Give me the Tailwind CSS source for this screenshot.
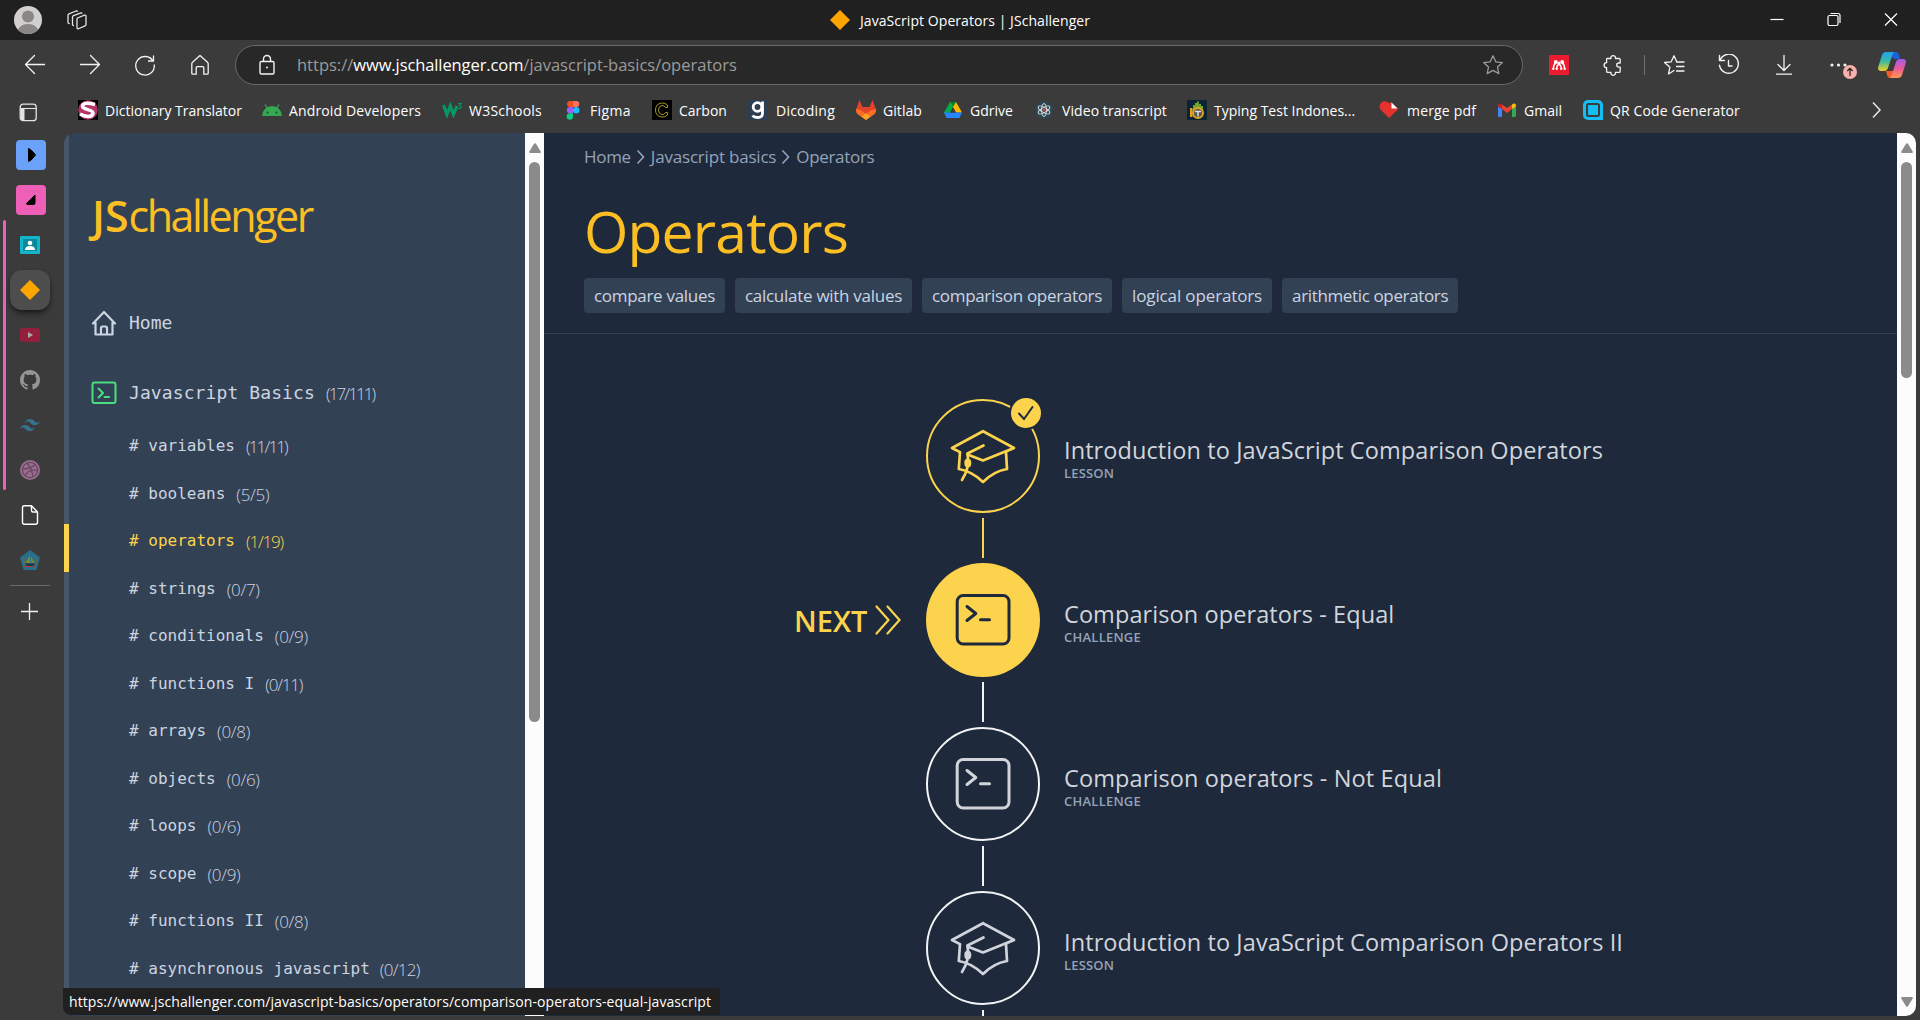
<!DOCTYPE html>
<html lang="en">
<head>
<meta charset="utf-8">
<title>JavaScript Operators | JSchallenger</title>
<script src="https://cdn.jsdelivr.net/npm/@tailwindcss/browser@4"></script>
</head>
<body class="flex h-[1020px] w-[1920px] flex-col overflow-hidden bg-[#3b3b3b] font-['Open_Sans',sans-serif] text-white">

<!-- shared icon shapes -->
<svg class="hidden">
  <symbol id="cap" viewBox="0 0 114 114"><g fill="none" stroke="currentColor" stroke-width="2.7" stroke-linecap="round" stroke-linejoin="round"><path d="M57 32.2 26 49l7 3.6M88 49 57 32.2M88 49 57 61.5 41.5 55.500M88 49l-7 3"/><path d="M57.500 46.500 41.500 54.500C43 63 42 72 36 81"/><path d="M34 53 32.800 70c9 1.500 17 6 24.200 13 7-7 15-11.500 24-13L80 53"/></g><ellipse cx="41.800" cy="64" rx="3.500" ry="4.500" fill="currentColor"/></symbol>
  <symbol id="term" viewBox="0 0 114 114"><g fill="none" stroke="currentColor" stroke-width="3" stroke-linecap="round" stroke-linejoin="round"><rect x="31.200" y="32.500" width="51.800" height="48.500" rx="6"/><path d="m41 43.500 8.800 7-8.800 7M54.500 56.700h9"/></g></symbol>
</svg>

<!-- title bar -->
<header class="flex h-10 shrink-0 items-center bg-[#202020] pl-[14px] text-[14px]">
  <svg class="size-7" viewBox="0 0 28 28"><clipPath id="av"><circle cx="14" cy="14" r="14"/></clipPath><g clip-path="url(#av)"><path fill="#d2d0ce" d="M0 0h28v28H0z"/><circle cx="14" cy="10.500" r="6" fill="#8a8886"/><ellipse cx="14" cy="26" rx="10.500" ry="8" fill="#8a8886"/></g></svg>
  <svg class="ml-[23px] size-6" viewBox="0 0 24 24" fill="none" stroke="#e4e4e4" stroke-width="1.300" stroke-linejoin="round"><path d="m12.500 10 7-2.800q1.500-.5 1.500 1v8.300q0 1-1 1.400l-6 2.600q-2 .8-2-1v-8.300q0-.9.500-1.200z"/><path d="M9 17.500q-1.500.2-1.500-1.200V9q0-1 1-1.400L16 4.800q1 0 1.300.8"/><path d="M4.800 15.500q-1.800.2-1.800-1.200V7.200q0-1 1-1.400L11 3q1.300-.3 1.700.8"/></svg>
  <div class="ml-[740px] flex w-[265px] items-center gap-[9px]">
    <svg class="size-[22px]" viewBox="0 0 22 22"><path fill="#ffa500" d="M11 1l10 10-10 10L1 11z"/></svg>
    <span class="whitespace-nowrap tracking-[0.06px]">JavaScript Operators | JSchallenger</span>
  </div>
  <div class="ml-auto flex items-center gap-[41px] pr-[21px]">
    <svg class="size-4" viewBox="0 0 16 16" stroke="#fff" stroke-width="1.200"><path d="M1.500 7.500h13"/></svg>
    <svg class="size-4" viewBox="0 0 16 16" fill="none" stroke="#fff" stroke-width="1.200"><rect x="2" y="3.500" width="10" height="10" rx="1.500"/><path d="M4.500 1.500h7.500q2 0 2 2V11"/></svg>
    <svg class="size-4" viewBox="0 0 16 16" stroke="#fff" stroke-width="1.200"><path d="m2 1.500 12 12m0-12-12 12"/></svg>
  </div>
</header>

<!-- navigation toolbar -->
<nav class="flex h-[50px] shrink-0 items-center pl-[23px] text-[#f3f3f3]">
  <div class="flex gap-[31px]">
    <svg class="size-6" viewBox="0 0 24 24" fill="none" stroke="currentColor" stroke-width="1.300" stroke-linecap="round" stroke-linejoin="round"><path d="M21.500 11.500h-19m9-9-9 9 9 9"/></svg>
    <svg class="size-6" viewBox="0 0 24 24" fill="none" stroke="currentColor" stroke-width="1.300" stroke-linecap="round" stroke-linejoin="round"><path d="M2.500 11.500h19m-9-9 9 9-9 9"/></svg>
    <svg class="size-6" viewBox="0 0 24 24" fill="none" stroke="currentColor" stroke-width="1.300" stroke-linecap="round" stroke-linejoin="round"><path d="M20.500 3v5h-5M20 8a9.300 9.300 0 1 0 1.300 4"/></svg>
    <svg class="size-6" viewBox="0 0 24 24" fill="none" stroke="currentColor" stroke-width="1.300" stroke-linejoin="round"><path d="m12 2.500 7.500 6.700q.7.600.7 1.600v9.400q0 1-1 1h-3.400v-6.500q0-1-1-1H9.200q-1 0-1 1v6.500H4.800q-1 0-1-1v-9.400q0-1 .7-1.600z"/></svg>
  </div>
  <div class="ml-[23px] flex h-10 w-[1288px] items-center rounded-full border border-[#6a6a6a] bg-[#282828] pl-[19px] pr-[18px]">
    <svg class="size-6" viewBox="0 0 24 24" fill="none" stroke="currentColor" stroke-width="1.400"><rect x="5" y="8.500" width="14" height="12.500" rx="1.500"/><path d="M8.500 8.500V6a3.500 3.500 0 0 1 7 0v2.500"/><circle cx="12" cy="14.500" r="1" fill="currentColor" stroke="none"/></svg>
    <p class="ml-[18px] whitespace-nowrap text-[16.5px] text-[#9b9b9b]"><span>https://</span><span class="tracking-[-0.1px] text-white">www.jschallenger.com</span><span>/javascript-basics/operators</span></p>
    <svg class="ml-auto size-[22px] text-[#9b9b9b]" viewBox="0 0 22 22" fill="none" stroke="currentColor" stroke-width="1.300" stroke-linejoin="round"><path d="m11 1.800 2.800 6 6.600.8-4.900 4.500 1.300 6.500-5.800-3.200-5.800 3.200 1.300-6.500L1.600 8.600l6.600-.8z"/></svg>
  </div>
  <div class="ml-[26px] flex size-5 items-center justify-center bg-[#eb1c2d]"><svg class="h-3 w-4" viewBox="0 0 16 12" fill="#fff"><circle cx="4.800" cy="3" r="2"/><circle cx="11.200" cy="3" r="2"/><circle cx="8" cy="4" r="1.500"/><path fill="none" stroke="#fff" stroke-width="1.400" d="M5 4Q2.500 5 2.500 9M11 4q2.500 1 2.500 5M8 5q-2 1-2.500 4.500M8 5q2 1 2.500 4.500"/><circle cx="2.300" cy="9.800" r="1.200"/><circle cx="5.800" cy="9.800" r="1.200"/><circle cx="10.200" cy="9.800" r="1.200"/><circle cx="13.700" cy="9.800" r="1.200"/></svg></div>
  <svg class="ml-[33px] size-[22px]" viewBox="0 0 22 22" fill="none" stroke="currentColor" stroke-width="1.300" stroke-linejoin="round"><path d="M5 4.500h4a2.300 2.300 0 1 1 4.400 0H17q1.200 0 1.200 1.200V9h-1.400a2.100 2.100 0 0 0 0 4.200h1.400v4q0 1.200-1.200 1.200h-3.600a2.300 2.300 0 1 1-4.400 0H5.800q-1.200 0-1.200-1.200v-3.500a2.500 2.500 0 0 1 0-5V5z"/></svg>
  <div class="ml-[20px] h-5 w-px bg-[#707070]"></div>
  <svg class="ml-[18px] size-[22px]" viewBox="0 0 22 22" fill="none" stroke="currentColor" stroke-width="1.300" stroke-linejoin="round" stroke-linecap="round"><path d="M11 16.500 5.500 20l1.400-6.800L1.500 8.500l6.700-.7L11 1.800l2.500 5.400M13.500 8H21M13.500 12.500H21M13.500 17H21"/></svg>
  <svg class="ml-[33px] size-[22px]" viewBox="0 0 22 22" fill="none" stroke="currentColor" stroke-width="1.400" stroke-linejoin="round" stroke-linecap="round"><path d="M1.500 1.500v5h5M2 6.300a9.500 9.500 0 1 1-.5 5M10.500 6.500V12H14"/></svg>
  <svg class="ml-[33px] size-[22px]" viewBox="0 0 22 22" fill="none" stroke="currentColor" stroke-width="1.300" stroke-linecap="round"><path d="M11 1.500v15m-6-6 6 6 6-6M3.500 20.200h15"/></svg>
  <div class="relative ml-[34px] h-[22px] w-[30px]">
    <svg class="size-full" viewBox="0 0 30 22" fill="currentColor"><circle cx="3" cy="11" r="1.600"/><circle cx="9.500" cy="11" r="1.600"/><circle cx="16" cy="11" r="1.600"/></svg>
    <svg class="absolute left-[14px] top-[11px] size-[14px]" viewBox="0 0 14 14"><circle cx="7" cy="7" r="7" fill="#f8b0aa"/><path d="M7 11V3.500M4.300 6 7 3.300 9.700 6" fill="none" stroke="#222" stroke-width="1.200"/></svg>
  </div>
  <svg class="ml-[19px] size-7" viewBox="0 0 28 28"><defs><linearGradient id="c1" x1="0" y1="0" x2="0" y2="1"><stop offset="0" stop-color="#1fa2f0"/><stop offset=".5" stop-color="#3fb9a0"/><stop offset="1" stop-color="#f5d020"/></linearGradient><linearGradient id="c2" x1="0" y1="0" x2="0" y2="1"><stop offset="0" stop-color="#a15cf0"/><stop offset=".5" stop-color="#ea5a9a"/><stop offset="1" stop-color="#ff9a50"/></linearGradient></defs><path fill="#1c5fd8" d="M8 1h10q2 0 2.700 2l1.300 5h-6z"/><path fill="#f4592f" d="M8 20h8l-2 7h-2q-2 0-2.700-2z"/><path fill="url(#c1)" d="M8 1h9q-2 0-3 4l-4 12q-1 3-4 3H3q-4 0-2.500-5L4 4q1-3 4-3z"/><path fill="url(#c2)" d="M20 27h-9q2 0 3-4l4-12q1-3 4-3h3q4 0 2.500 5L24 24q-1 3-4 3z"/></svg>
</nav>

<!-- favourites bar -->
<div class="flex h-[43px] shrink-0 items-center pb-[3px] pl-[19px] text-[14px]">
  <svg class="mr-[40px] mt-[4px] size-[19px] shrink-0" viewBox="0 0 19 19"><rect x="1.200" y="1.200" width="16" height="16.500" rx="3" fill="none" stroke="#e4e4e4" stroke-width="1.300"/><path fill="#e4e4e4" d="M1.500 6h4v11.500H4q-2.500 0-2.500-2.500z"/><path stroke="#e4e4e4" d="M1 5.500h16.500"/></svg>

  <div class="flex w-[184px] items-center gap-[7px]"><svg class="size-5 shrink-0" viewBox="0 0 20 20"><path d="M0 0h20v20H0z"/><circle cx="10" cy="10" r="9.800" fill="#b53468"/><path fill="none" stroke="#fff" stroke-width="3.500" d="M17 4.500Q5 1.500 4.500 6c-.3 4.200 11.500 3 10.500 7.500-.8 4-8 3.500-13 .5"/></svg><span class="whitespace-nowrap">Dictionary Translator</span></div>
  <div class="flex w-[180px] items-center gap-[7px]"><svg class="size-5 shrink-0" viewBox="0 0 20 20"><path fill="#34a853" d="M0 16a10 10 0 0 1 20 0z"/><path stroke="#34a853" stroke-width="1.200" d="m5.500 8.500-2.500-4m11.500 4 2.500-4"/><circle cx="5.500" cy="12.500" r="1" fill="#1c4427"/><circle cx="14.500" cy="12.500" r="1" fill="#1c4427"/></svg><span class="whitespace-nowrap tracking-[0.14px]">Android Developers</span></div>
  <div class="flex w-[121px] items-center gap-[7px]"><svg class="size-5 shrink-0" viewBox="0 0 20 20" fill="none" stroke="#059862"><path stroke-width="3.200" d="m1.500 5 3.500 9.500L8.300 6l3.200 8.500L15 6"/><path stroke-width="1.200" d="M16 3.500h3L17.500 5.500q2.500.5 1 2.500-1 1-2.500.3"/></svg><span class="whitespace-nowrap tracking-[0.23px]">W3Schools</span></div>
  <div class="flex w-[89px] items-center gap-[7px]"><svg class="size-5 shrink-0" viewBox="0 0 20 20"><path fill="#f24e1e" d="M10 1v6H7a3 3 0 0 1 0-6z"/><path fill="#ff7262" d="M10 1h3.300a3 3 0 0 1 0 6H10z"/><path fill="#a259ff" d="M10 7v6.300H7A3 3 0 0 1 7 7z"/><circle cx="13.200" cy="10.200" r="3.200" fill="#1abcfe"/><path fill="#0acf83" d="M10 13.300v3.400a3.200 3.200 0 1 1-3-3.400z"/></svg><span class="whitespace-nowrap tracking-[0.38px]">Figma</span></div>
  <div class="flex w-[96px] items-center gap-[7px]"><svg class="size-5 shrink-0" viewBox="0 0 20 20"><path d="M0 0h20v20H0z"/><path fill="none" stroke="#a39a1c" stroke-width="1" d="M15.500 7.500V5Q13 2.500 9.500 3 3.500 4 3.500 10t6 7q3.500.5 6-2v-2.500h-2Q12 15 10 14.500 6.500 14 6.500 10T10 5.500q2-.3 3.500 2z"/></svg><span class="whitespace-nowrap">Carbon</span></div>
  <div class="flex w-[108px] items-center gap-[8px]"><svg class="size-5 shrink-0" viewBox="0 0 20 20"><path fill="#2d3e50" d="M0 0h20v20H0z"/><g fill="none" stroke="#fff" stroke-width="2.800"><circle cx="9.500" cy="7" r="4.300"/><path d="M14.500 1.500v12q0 4-5 4-3.500 0-5-2"/></g></svg><span class="whitespace-nowrap tracking-[0.24px]">Dicoding</span></div>
  <div class="flex w-[87px] items-center gap-[7px]"><svg class="size-5 shrink-0" viewBox="0 0 20 20"><path fill="#e24329" d="M3.500 0 6.500 7h7l3-7L20 9.500 10 19.500 0 9.500z"/><path fill="#fc6d26" d="M0 9q5 .5 10 5 5-4.500 10-5 .5 3.500-2 5.500l-8 5.500-8-5.500Q-.5 12.500 0 9z"/><path fill="#fca326" d="m5.500 16.500 4.500-3.300 4.500 3.300L10 20z"/></svg><span class="whitespace-nowrap tracking-[0.07px]">Gitlab</span></div>
  <div class="flex w-[91px] items-center gap-[7px]"><svg class="size-5 shrink-0" viewBox="0 0 20 20"><path fill="#00ac47" d="M7 2h3.500v4L4.500 18 1 12.500z"/><path fill="#ffba00" d="M7 2h6l6 10.500h-6z"/><path fill="#00832d" d="M7 2h6l-3 5z"/><path fill="#2684fc" d="M4 12.500h15L16.500 18H3.500L1 12.500z"/><path fill="#3b3b3b" d="m10 7.500 3 5H7z"/></svg><span class="whitespace-nowrap">Gdrive</span></div>
  <div class="flex w-[153px] items-center gap-[8px]"><svg class="size-5 shrink-0" viewBox="0 0 20 20"><circle cx="10" cy="10" r="9" fill="#2c4654"/><g fill="none" stroke="#d9d9d9" stroke-width="1"><ellipse cx="10" cy="10" rx="2.500" ry="6.500"/><ellipse cx="10" cy="10" rx="2.500" ry="6.500" transform="rotate(60 10 10)"/><ellipse cx="10" cy="10" rx="2.500" ry="6.500" transform="rotate(-60 10 10)"/></g><circle cx="10" cy="10" r="1.300" fill="#e0455e"/></svg><span class="whitespace-nowrap tracking-[0.08px]">Video transcript</span></div>
  <div class="flex w-[192px] items-center gap-[7px]"><svg class="size-5 shrink-0" viewBox="0 0 20 20"><path fill="#0d2435" d="M0 0h20v20H0z"/><path fill="#6fa52c" d="M6 11V5h2V3h2V1.500h2V4h2v2h2v5z"/><path fill="#e0a321" d="M3 8h2.500v9H3z"/><circle cx="11" cy="13" r="5" fill="#555" stroke="#e0a321" stroke-width="2"/><path stroke="#ddd" stroke-width="1.500" d="M8 11.500h6m-3 0v5"/></svg><span class="whitespace-nowrap">Typing Test Indones...</span></div>
  <div class="flex w-[118px] items-center gap-[8px]"><svg class="size-5 shrink-0" viewBox="0 0 20 20"><path fill="#e5322d" d="M10 18 1.500 9.500A5 5 0 0 1 10 3.500l2-1.500 7.500 7z"/><path fill="#fff" d="M12.500 2.500v6h6z"/></svg><span class="whitespace-nowrap tracking-[0.17px]">merge pdf</span></div>
  <div class="flex w-[86px] items-center gap-[7px]"><svg class="size-5 shrink-0" viewBox="0 0 20 20"><path fill="#4285f4" d="M1 6l4 3v8H2.500Q1 17 1 15.500z"/><path fill="#34a853" d="m19 6-4 3v8h2.500q1.500 0 1.500-1.500z"/><path fill="#ea4335" d="M5 4.500 10 8l5-3.500V9l-5 4-5-4z"/><path fill="#c5221f" d="M1 5.500Q1 3 3.500 3.500L5 4.500V9L1 6.500z"/><path fill="#fbbc04" d="M19 5.500Q19 3 16.500 3.500L15 4.500V9l4-2.500z"/></svg><span class="whitespace-nowrap">Gmail</span></div>
  <div class="flex items-center gap-[7px]"><svg class="size-5 shrink-0" viewBox="0 0 20 20"><rect width="20" height="20" rx="5" fill="#15bdf5"/><path fill="#15bdf5" d="M10 10h10v10H10z"/><rect x="4" y="4" width="12" height="12" rx="1.500" fill="none" stroke="#3b3b3b" stroke-width="2"/></svg><span class="whitespace-nowrap tracking-[0.14px]">QR Code Generator</span></div>
  <svg class="ml-auto mr-[35px] size-[18px]" viewBox="0 0 18 18" fill="none" stroke="#e8e8e8" stroke-width="1.500"><path d="m6 1.500 7 7.500-7 7.500"/></svg>
</div>

<div class="flex h-[883px] shrink-0">
  <!-- vertical tabs -->
  <aside class="relative -mt-px flex w-16 shrink-0 flex-col pl-[8px]">
    <div class="absolute left-[3px] top-[88px] h-[270px] w-[3px] rounded-full bg-[#ee5fb7]"></div>
    <div class="flex h-[45px] w-[46px] items-center justify-center"><div class="flex size-[30px] items-center justify-center rounded bg-[#6aa1fa]"><svg class="size-4" viewBox="0 0 16 16"><path d="M5.500 1.500q2.500.5 7 6.500-4.500 6-7 6.500z" stroke="#000" stroke-linejoin="round"/></svg></div></div>
    <div class="flex h-[45px] w-[46px] items-center justify-center"><div class="flex size-[30px] items-center justify-center rounded bg-[#ee5fb7]"><svg class="size-4" viewBox="0 0 16 16"><path d="M12 3v8q0 1.500-1.500 1.500H4Q3 12 4 11z" stroke="#000" stroke-linejoin="round"/></svg></div></div>
    <div class="flex h-[45px] w-[44px] items-center justify-center"><svg class="size-5" viewBox="0 0 20 20"><rect y="1" width="20" height="18" rx="1" fill="#14b5cc"/><rect x="3" y="4" width="14" height="12" fill="#0a8a96"/><circle cx="10" cy="8" r="2.300" fill="#fff"/><path fill="#fff" d="M5 15q0-4 5-4t5 4z"/></svg></div>
    <div class="flex h-[45px] w-[44px] items-center"><div class="ml-[2px] flex size-10 items-center justify-center rounded-xl bg-[#4d4d4d] shadow-md shadow-black/50"><svg class="size-5" viewBox="0 0 20 20"><path fill="#ffa500" d="m10 0 10 10-10 10L0 10z"/></svg></div></div>
    <div class="flex h-[45px] w-[44px] items-center justify-center"><svg class="size-5" viewBox="0 0 20 20"><rect y="3" width="20" height="14" rx="3" fill="#941f3c"/><path fill="#a9a9a9" d="m8 7 5 3-5 3z"/></svg></div>
    <div class="flex h-[45px] w-[44px] items-center justify-center"><svg class="size-5" viewBox="0 0 16 16" fill="#959595"><path d="M8 0C3.580 0 0 3.580 0 8c0 3.540 2.290 6.530 5.470 7.590.4.070.55-.17.55-.38 0-.19-.01-.82-.01-1.490-2.010.37-2.530-.49-2.690-.94-.09-.23-.48-.94-.82-1.130-.28-.15-.68-.52-.01-.53.63-.01 1.080.58 1.230.82.72 1.210 1.870.87 2.330.66.07-.52.28-.87.51-1.070-1.780-.2-3.640-.89-3.640-3.950 0-.87.31-1.590.82-2.150-.08-.2-.36-1.020.08-2.120 0 0 .67-.21 2.200.82.64-.18 1.320-.27 2-.27s1.360.09 2 .27c1.530-1.040 2.200-.82 2.200-.82.44 1.100.16 1.920.08 2.120.51.56.82 1.270.82 2.150 0 3.070-1.870 3.750-3.650 3.950.29.25.54.73.54 1.480 0 1.070-.01 1.930-.01 2.200 0 .21.15.46.55.38A8.010 8.010 0 0 0 16 8c0-4.420-3.580-8-8-8z"/></svg></div>
    <div class="flex h-[45px] w-[44px] items-center justify-center"><svg class="size-5" viewBox="0 0 24 24" fill="#36728f"><path d="M12 4.800c-3.200 0-5.200 1.600-6 4.800 1.200-1.600 2.600-2.200 4.200-1.800.9.230 1.570.9 2.300 1.650C13.700 10.650 15.100 12 18 12c3.200 0 5.200-1.600 6-4.800-1.200 1.600-2.600 2.200-4.200 1.800-.9-.23-1.570-.9-2.300-1.650C16.300 6.150 14.900 4.800 12 4.800zM6 12c-3.200 0-5.200 1.600-6 4.800 1.200-1.600 2.600-2.200 4.200-1.800.9.230 1.570.9 2.300 1.650 1.200 1.200 2.600 2.550 5.500 2.550 3.200 0 5.200-1.600 6-4.800-1.200 1.600-2.600 2.200-4.200 1.800-.9-.23-1.570-.9-2.300-1.650C10.300 13.350 8.900 12 6 12z"/></svg></div>
    <div class="flex h-[45px] w-[44px] items-center justify-center"><svg class="size-5" viewBox="0 0 20 20" fill="none" stroke="#6f4666" stroke-width="1.300"><circle cx="10" cy="10" r="10" fill="#966f8e" stroke="none"/><circle cx="10" cy="10" r="7.600"/><path d="M7 3q5 6 6 14M2.500 9q9 0 13-5M5 15.500q4-7 12.500-5"/></svg></div>
    <div class="flex h-[45px] w-[44px] items-center justify-center"><svg class="size-5" viewBox="0 0 20 20" fill="none" stroke="#fff" stroke-width="1.400" stroke-linejoin="round"><path d="M11.500.800H4.500q-2 0-2 2v14.400q0 2 2 2h11q2 0 2-2V7z"/><path d="M11.500 1v4.500q0 1.500 1.500 1.500h4.500"/></svg></div>
    <div class="flex h-[45px] w-[44px] items-center justify-center"><svg class="size-5" viewBox="0 0 20 20"><path fill="#28708a" d="m10 0 10 7.500L16.500 20h-13L0 7.500z"/><path fill="#7c8a2a" d="M10 5v8H5.500zm1 1 3.500 7H11z"/><path fill="#1d3340" d="M5 13.500h10l-2 2.500H7z"/><path stroke="#9c4141" stroke-width="1.200" d="M4 16.500h12"/><path stroke="#8d5d2f" stroke-width="1" d="M4 8v7m12-7v7"/></svg></div>
    <div class="ml-[2px] mt-[3px] h-px w-10 bg-[#6b6b6b]"></div>
    <svg class="ml-[12px] mt-[16px] size-[19px]" viewBox="0 0 19 19" stroke="#f0f0f0" stroke-width="1.300"><path d="M9.500 1v17M1 9.500h17"/></svg>
  </aside>

  <!-- page -->
  <div class="flex w-[1852px] overflow-hidden rounded-[10px] bg-[#1e293b]">
    <aside class="flex w-[461px] shrink-0 flex-col border-l-[5px] border-[#475569] bg-[#334155] text-[#cbd5e1]">
      <h2 class="ml-[23px] mt-[51px] whitespace-nowrap text-[43px] leading-[64px] text-[#fbbf24]"><span class="font-semibold">JS</span><span class="tracking-[-2.5px]">challenger</span></h2>
      <a class="ml-[22px] mt-[62px] flex h-[26px] items-center gap-3 font-['DejaVu_Sans_Mono',monospace] text-lg"><svg class="size-[26px]" viewBox="0 0 26 26" fill="none" stroke="currentColor" stroke-width="2.200" stroke-linecap="round" stroke-linejoin="round"><path d="M2 13.500 13 2l11 11.500M4.500 12v12.500h17V12M10 24v-6q0-1.500 1.500-1.500h3q1.500 0 1.500 1.500v6"/></svg><span>Home</span></a>
      <a class="ml-[22px] mt-[44px] flex h-[26px] items-center font-['DejaVu_Sans_Mono',monospace] text-lg"><svg class="mr-[12px] size-[26px]" viewBox="0 0 26 26" fill="none" stroke="#4ade80" stroke-width="2" stroke-linecap="round" stroke-linejoin="round"><rect x="1.500" y="2.500" width="23" height="20.500" rx="2"/><path d="m7.500 8.500 4.500 4.500-4.500 4.500M13.500 17h4.500"/></svg><span class="tracking-[0.1px]">Javascript Basics</span><span class="ml-[11px] mt-[3px] font-['Open_Sans'] text-[17px] font-light tracking-[-1.9px]">(17/111)</span></a>
      <ul class="mt-[23px] flex flex-col font-['DejaVu_Sans_Mono',monospace] text-base *:flex *:h-[47.5px] *:items-start *:whitespace-pre *:pl-[60px] *:pt-[5px]">
        <li><span># variables</span><span class="ml-[11px] font-['Open_Sans'] text-[17px] font-light tracking-[-1.85px]">(11/11)</span></li>
        <li><span># booleans</span><span class="ml-[11px] font-['Open_Sans'] text-[17px] font-light tracking-[-0.3px]">(5/5)</span></li>
        <li class="-ml-[5px] border-l-[5px] border-[#fcd34d] text-[#fcd34d]"><span># operators</span><span class="ml-[11px] font-['Open_Sans'] text-[17px] font-light tracking-[-1.2px]">(1/19)</span></li>
        <li><span># strings</span><span class="ml-[11px] font-['Open_Sans'] text-[17px] font-light tracking-[-0.3px]">(0/7)</span></li>
        <li><span># conditionals</span><span class="ml-[11px] font-['Open_Sans'] text-[17px] font-light tracking-[-0.3px]">(0/9)</span></li>
        <li><span># functions I</span><span class="ml-[11px] font-['Open_Sans'] text-[17px] font-light tracking-[-1.2px]">(0/11)</span></li>
        <li><span># arrays</span><span class="ml-[11px] font-['Open_Sans'] text-[17px] font-light tracking-[-0.3px]">(0/8)</span></li>
        <li><span># objects</span><span class="ml-[11px] font-['Open_Sans'] text-[17px] font-light tracking-[-0.3px]">(0/6)</span></li>
        <li><span># loops</span><span class="ml-[11px] font-['Open_Sans'] text-[17px] font-light tracking-[-0.3px]">(0/6)</span></li>
        <li><span># scope</span><span class="ml-[11px] font-['Open_Sans'] text-[17px] font-light tracking-[-0.3px]">(0/9)</span></li>
        <li><span># functions II</span><span class="ml-[11px] font-['Open_Sans'] text-[17px] font-light tracking-[-0.3px]">(0/8)</span></li>
        <li><span># asynchronous javascript</span><span class="ml-[10px] font-['Open_Sans'] text-[17px] font-light tracking-[-0.7px]">(0/12)</span></li>
      </ul>
    </aside>
    <div class="flex w-[19px] shrink-0 flex-col items-center bg-[#fcfcfc]">
      <svg class="mt-[10px] h-[10px] w-3" viewBox="0 0 12 10" fill="#8b8b8b"><path d="M5 .800q1-1 2 0l4.700 7.700q.6 1.500-1 1.500H1.300q-1.600 0-1-1.500z"/></svg>
      <div class="mt-[9px] h-[560px] w-[11px] rounded-full bg-[#8b8b8b]"></div>
    </div>

    <main class="flex w-[1353px] shrink-0 flex-col">
      <div class="flex h-[201px] shrink-0 flex-col border-b border-[#334155] pl-[40px]">
        <div class="mt-[12px] flex h-6 items-center whitespace-nowrap text-[17px] text-[#94a3b8]">
          <span class="tracking-[-0.3px]">Home</span>
          <svg class="mx-[4px] h-4 w-3" viewBox="0 0 12 16" fill="none" stroke="currentColor" stroke-width="1.600"><path d="m2.500 1.500 6 6.500-6 6.500"/></svg>
          <span class="tracking-[-0.2px]">Javascript basics</span>
          <svg class="mx-[4px] h-4 w-3" viewBox="0 0 12 16" fill="none" stroke="currentColor" stroke-width="1.600"><path d="m2.500 1.500 6 6.500-6 6.500"/></svg>
          <span class="tracking-[-0.32px]">Operators</span>
        </div>
        <h1 class="mt-[32px] w-fit text-[57px] leading-[60px] tracking-[-0.8px] text-[#fbbf24]">Operators</h1>
        <div class="mt-[17px] flex gap-[10px] whitespace-nowrap text-[17px] text-[#cbd5e1] *:flex *:h-[35px] *:items-center *:rounded *:bg-[#334155] *:px-[10px]">
          <div><span class="tracking-[-0.3px]">compare values</span></div><div><span class="tracking-[-0.28px]">calculate with values</span></div><div><span class="tracking-[-0.31px]">comparison operators</span></div><div><span class="tracking-[-0.13px]">logical operators</span></div><div><span class="tracking-[-0.36px]">arithmetic operators</span></div>
        </div>
      </div>

      <div class="mt-[65px] flex flex-col whitespace-nowrap text-[#d1d5db]">
        <div class="ml-[382px] flex h-[114px] items-center">
          <div class="relative size-[114px] shrink-0 rounded-full border-2 border-[#fcd34d] text-[#fcd34d]"><svg class="absolute -left-0.5 -top-0.5 size-[114px]"><use href="#cap"/></svg>
            <svg class="absolute right-[-6px] top-[-6px] size-9" viewBox="0 0 36 36"><circle cx="18" cy="18" r="17" fill="#1e293b"/><circle cx="18" cy="18" r="15" fill="#fcd34d"/><path fill="none" stroke="#1e293b" stroke-width="2" stroke-linecap="round" d="m11 18.500 5 5.500 8.500-12"/></svg></div>
          <div class="ml-[24px] mt-[5px]"><h3 class="text-[23.500px] leading-7 tracking-[0.09px]">Introduction to JavaScript Comparison Operators</h3><p class="text-[13px] font-semibold leading-[18px] tracking-[0.16px] text-[#94a3b8]">LESSON</p></div>
        </div>
        <div class="my-[5px] ml-[438px] h-10 w-0.5 bg-[#fcd34d]"></div>
        <div class="ml-[250px] flex h-[114px] items-center">
          <div class="flex w-[132px] items-center text-[29px] font-semibold text-[#fcd34d]"><span class="mt-[2px]">NEXT</span><svg class="ml-2 h-[30px] w-[27px]" viewBox="0 0 27 30" fill="none" stroke="currentColor" stroke-width="2.200" stroke-linecap="round"><path d="m1.500 1.500 12 13.500-12 13.500m11-27L24.500 15 12.500 28.500"/></svg></div>
          <div class="size-[114px] shrink-0 rounded-full bg-[#fcd34d] text-[#1e293b]"><svg class="size-[114px]"><use href="#term"/></svg></div>
          <div class="ml-[24px] mt-[5px]"><h3 class="text-[23.500px] leading-7 tracking-[0.09px]">Comparison operators - Equal</h3><p class="text-[13px] font-semibold leading-[18px] tracking-[0.24px] text-[#94a3b8]">CHALLENGE</p></div>
        </div>
        <div class="my-[5px] ml-[438px] h-10 w-0.5 bg-[#f3f4f6]"></div>
        <div class="ml-[382px] flex h-[114px] items-center">
          <div class="relative size-[114px] shrink-0 rounded-full border-2 border-[#f3f4f6]"><svg class="absolute -left-0.5 -top-0.5 size-[114px]"><use href="#term"/></svg></div>
          <div class="ml-[24px] mt-[5px]"><h3 class="text-[23.500px] leading-7 tracking-[0.12px]">Comparison operators - Not Equal</h3><p class="text-[13px] font-semibold leading-[18px] tracking-[0.24px] text-[#94a3b8]">CHALLENGE</p></div>
        </div>
        <div class="my-[5px] ml-[438px] h-10 w-0.5 bg-[#f3f4f6]"></div>
        <div class="ml-[382px] flex h-[114px] items-center">
          <div class="relative size-[114px] shrink-0 rounded-full border-2 border-[#f3f4f6]"><svg class="absolute -left-0.5 -top-0.5 size-[114px]"><use href="#cap"/></svg></div>
          <div class="ml-[24px] mt-[5px]"><h3 class="text-[23.500px] leading-7 tracking-[0.1px]">Introduction to JavaScript Comparison Operators II</h3><p class="text-[13px] font-semibold leading-[18px] tracking-[0.16px] text-[#94a3b8]">LESSON</p></div>
        </div>
        <div class="my-[5px] ml-[438px] h-10 w-0.5 bg-[#f3f4f6]"></div>
      </div>
    </main>

    <div class="flex w-[19px] shrink-0 flex-col items-center bg-[#fcfcfc]">
      <svg class="mt-[10px] h-[10px] w-3" viewBox="0 0 12 10" fill="#8b8b8b"><path d="M5 .800q1-1 2 0l4.700 7.700q.6 1.500-1 1.500H1.300q-1.600 0-1-1.500z"/></svg>
      <div class="mt-[9px] h-[216px] w-[11px] rounded-full bg-[#8b8b8b]"></div>
      <svg class="mb-[9px] mt-auto h-[10px] w-3 rotate-180" viewBox="0 0 12 10" fill="#8b8b8b"><path d="M5 .800q1-1 2 0l4.700 7.700q.6 1.500-1 1.500H1.300q-1.600 0-1-1.500z"/></svg>
    </div>
  </div>
</div>

<!-- link status bubble -->
<div class="absolute left-[63px] top-[988px] flex h-[27px] w-[657px] items-center whitespace-nowrap rounded-bl-lg rounded-tr bg-[#202020] pb-px pl-[6px] text-[14px] tracking-[0.09px]">https://www.jschallenger.com/javascript-basics/operators/comparison-operators-equal-javascript</div>
</body>
</html>
